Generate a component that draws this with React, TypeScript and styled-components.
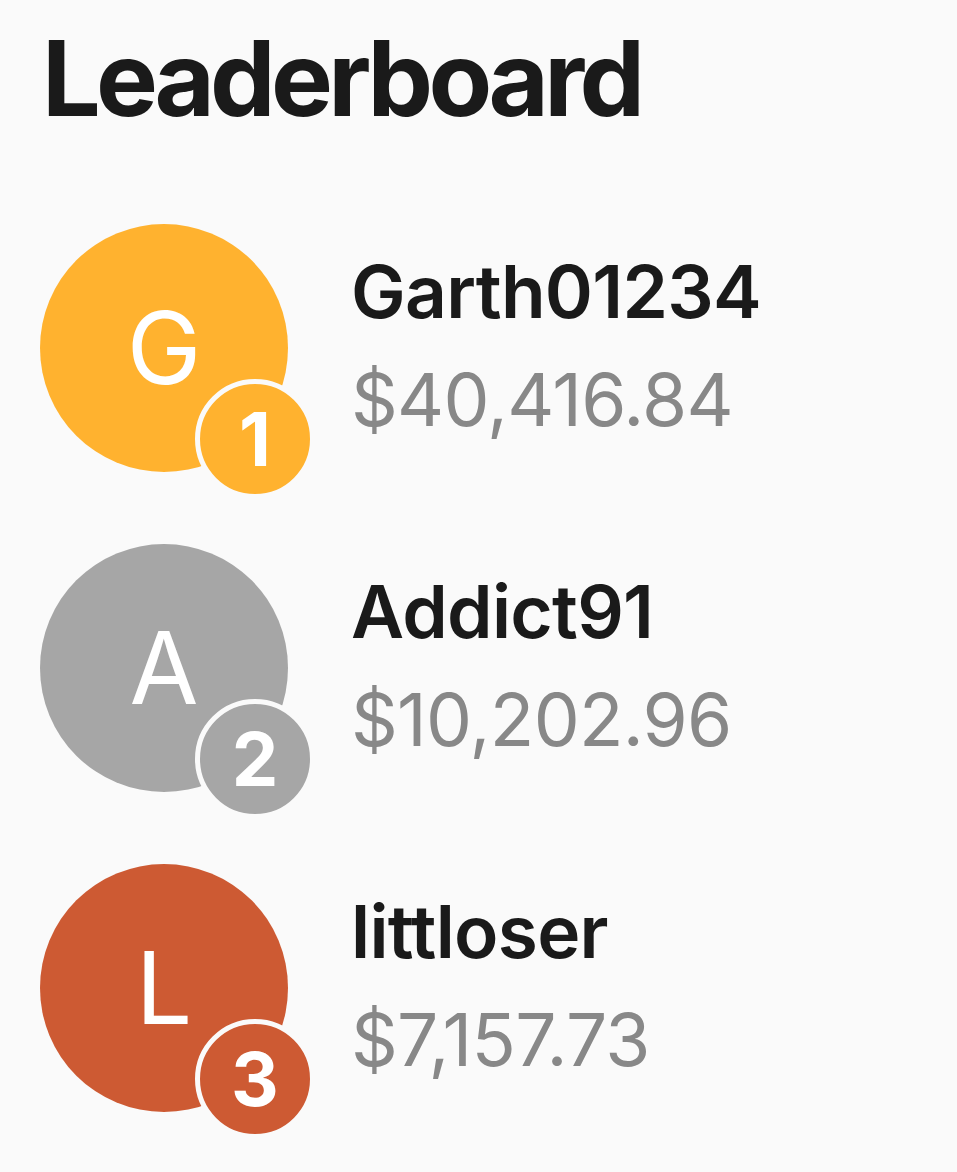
import React from "react";
import styled, { createGlobalStyle } from "styled-components";

const GlobalStyle = createGlobalStyle`
  html, body {
    margin: 0;
    padding: 0;
    background: #fafafa;
  }
  body {
    font-family: Inter, "Noto Sans", "Liberation Sans", sans-serif;
  }
`;

const Page = styled.div`
  padding: 16px 40px;
  background: #fafafa;
  min-height: 1172px;
  box-sizing: border-box;
`;

const Title = styled.h1`
  margin: 0 0 83px;
  padding-left: 2px;
  font-size: 104px;
  line-height: 1.2;
  font-weight: 700;
  letter-spacing: -0.045em;
  color: #1a1a1a;
`;

const List = styled.div`
  display: flex;
  flex-direction: column;
  gap: 72px;
`;

const Row = styled.div`
  display: flex;
  align-items: center;
  gap: 63px;
`;

const Avatar = styled.div<{ $color: string }>`
  position: relative;
  flex: none;
  width: 248px;
  height: 248px;
  border-radius: 50%;
  background: ${(p) => p.$color};
  display: flex;
  align-items: center;
  justify-content: center;
  color: #fff;
  font-size: 100px;
  font-weight: 400;
  line-height: 1;
`;

const Badge = styled.div<{ $color: string }>`
  position: absolute;
  right: -27px;
  bottom: -27px;
  width: 120px;
  height: 120px;
  box-sizing: border-box;
  border: 5px solid #fafafa;
  border-radius: 50%;
  background: ${(p) => p.$color};
  display: flex;
  align-items: center;
  justify-content: center;
  color: #fff;
  font-size: 74px;
  font-weight: 700;
  line-height: 1;
`;

const Info = styled.div`
  display: flex;
  flex-direction: column;
  gap: 20px;
  margin-top: -4px;
`;

const Name = styled.div`
  font-size: 73px;
  line-height: 88px;
  font-weight: 600;
  letter-spacing: -0.01em;
  color: #1a1a1a;
`;

const Amount = styled.div`
  font-size: 73px;
  line-height: 88px;
  font-weight: 400;
  letter-spacing: -0.01em;
  color: #888888;
`;

interface Player {
  rank: number;
  name: string;
  amount: string;
  color: string;
}

const players: Player[] = [
  { rank: 1, name: "Garth01234", amount: "$40,416.84", color: "#ffb22f" },
  { rank: 2, name: "Addict91", amount: "$10,202.96", color: "#a6a6a6" },
  { rank: 3, name: "littloser", amount: "$7,157.73", color: "#cd5a33" },
];

const App: React.FC = () => {
  return (
    <Page>
      <GlobalStyle />
      <Title>Leaderboard</Title>
      <List>
        {players.map((p) => (
          <Row key={p.rank}>
            <Avatar $color={p.color}>
              {p.name.charAt(0).toUpperCase()}
              <Badge $color={p.color}>{p.rank}</Badge>
            </Avatar>
            <Info>
              <Name>{p.name}</Name>
              <Amount>{p.amount}</Amount>
            </Info>
          </Row>
        ))}
      </List>
    </Page>
  );
};

export default App;
